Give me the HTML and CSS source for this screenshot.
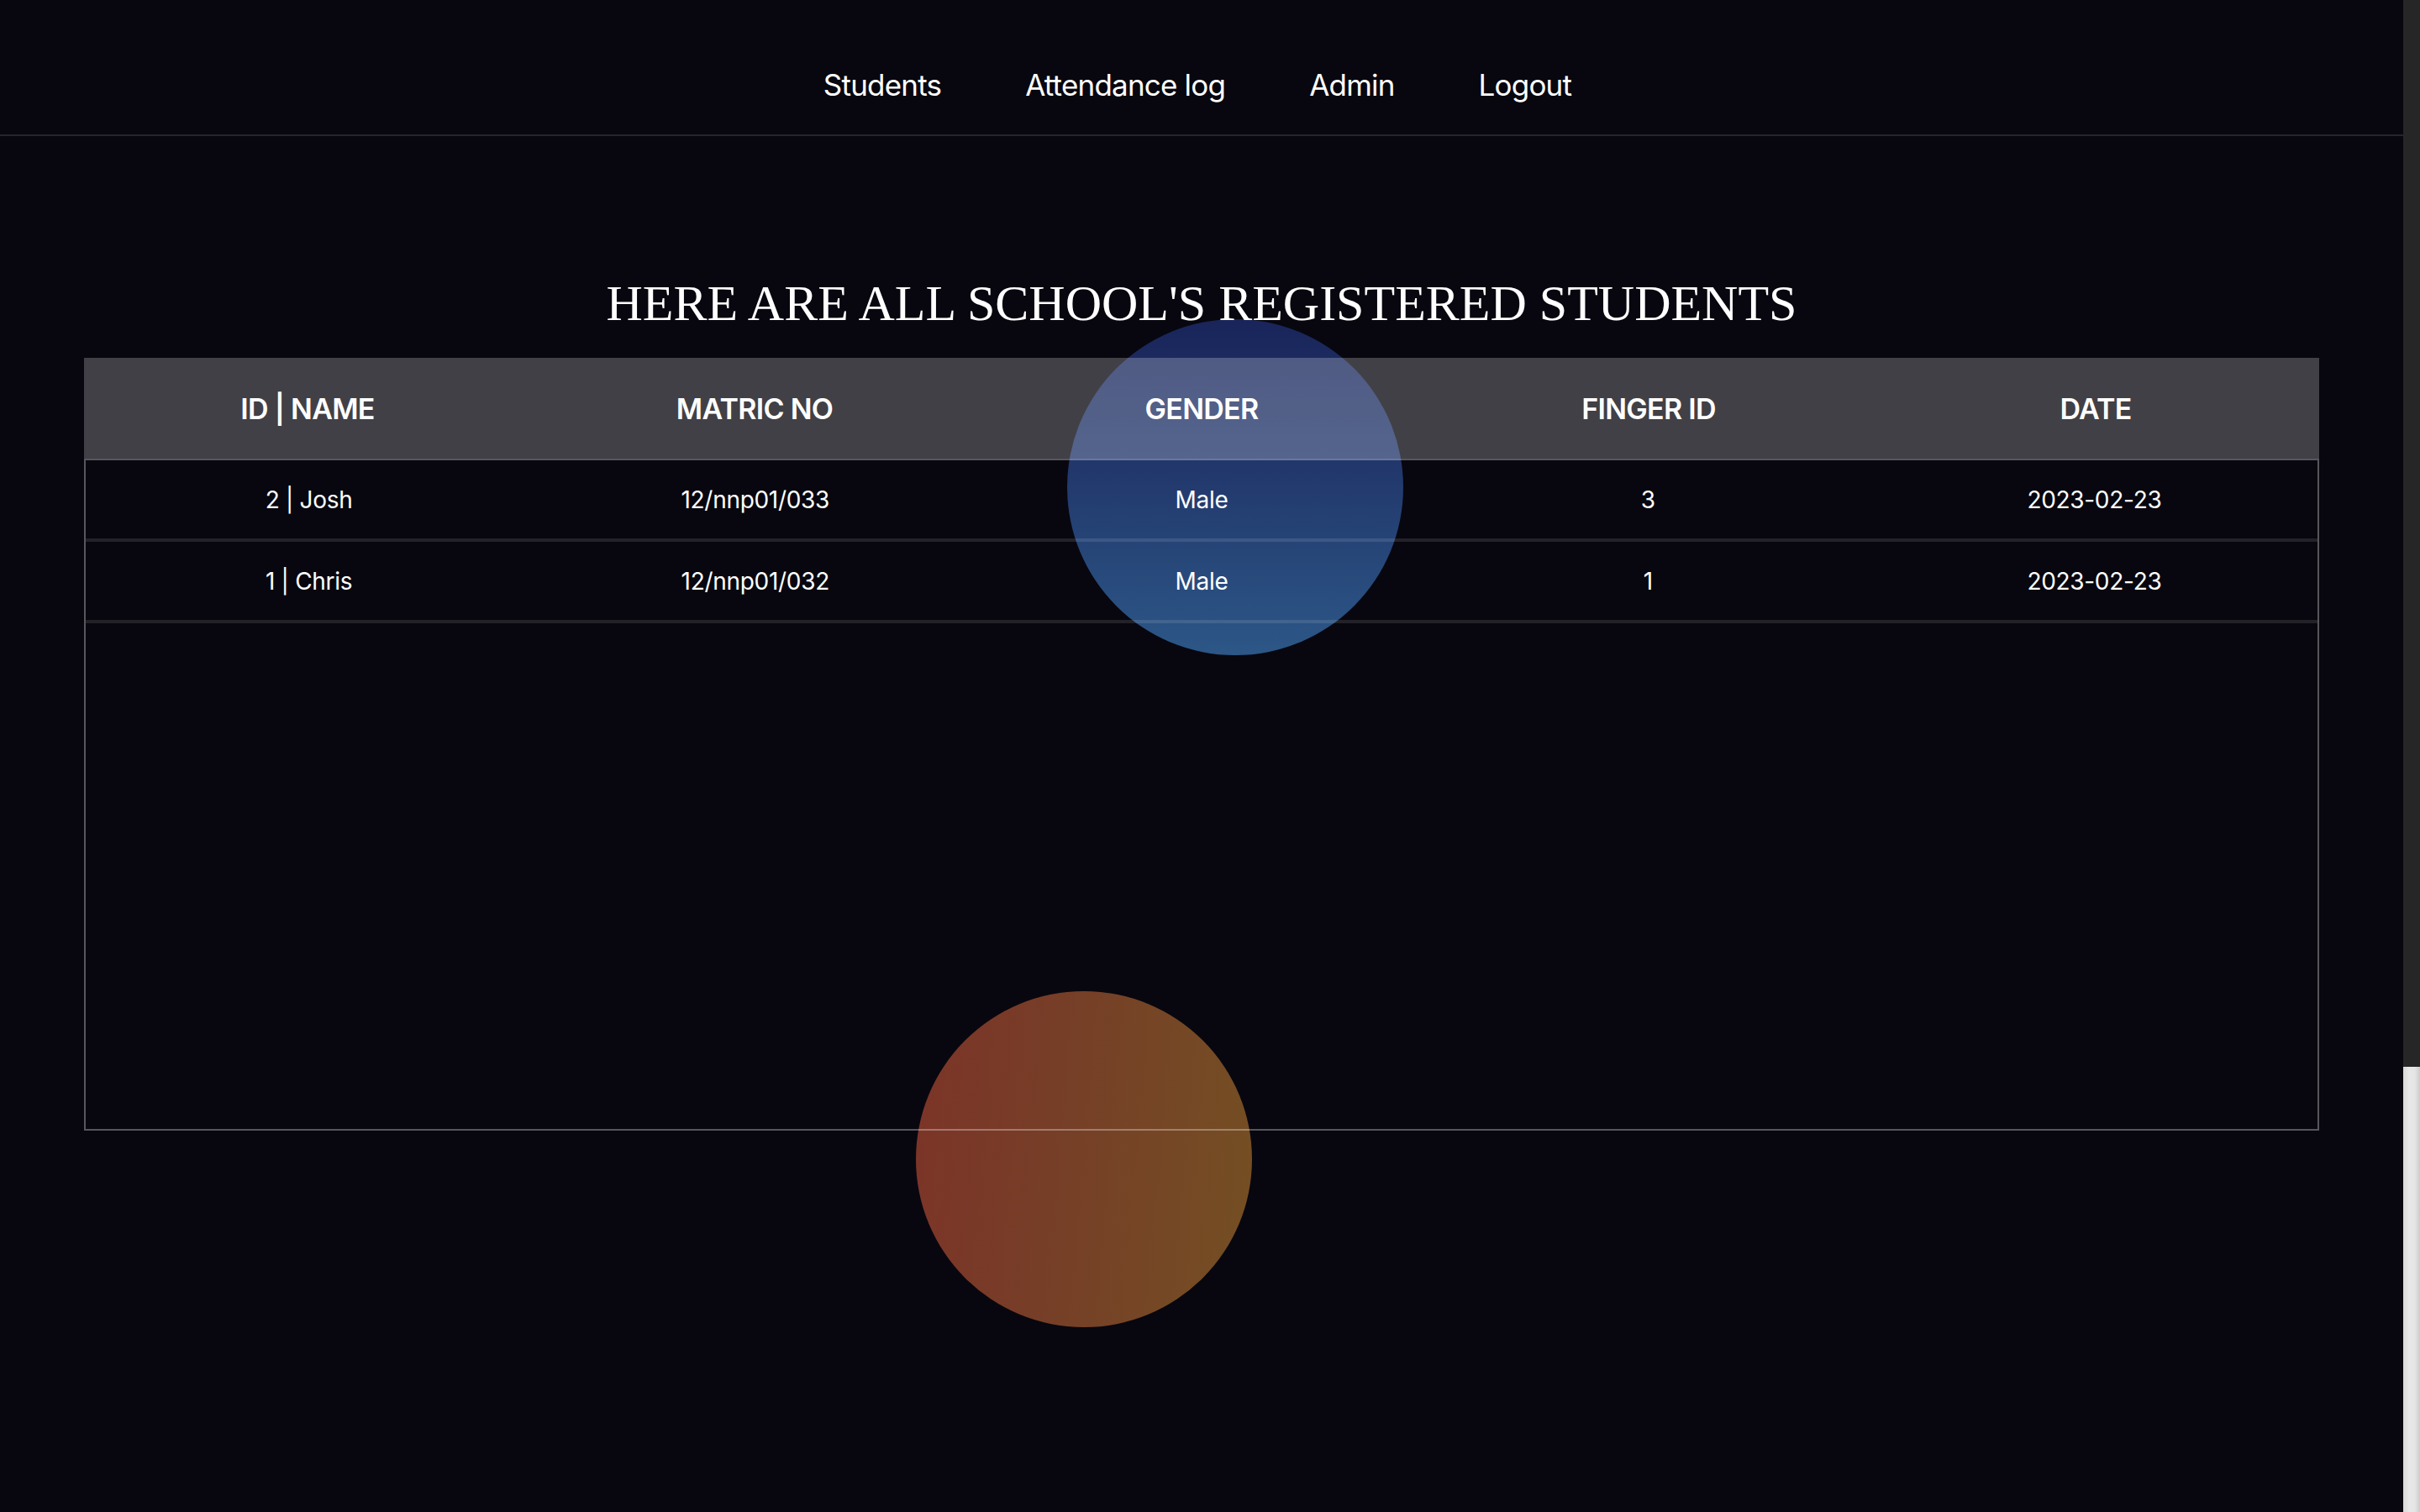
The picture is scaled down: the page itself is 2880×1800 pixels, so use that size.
FILE: index.html
```html
<!DOCTYPE html>
<html lang="en">
<head>
<meta charset="utf-8">
<title>Students</title>
<link rel="stylesheet" href="styles.css">
</head>
<body>
<div class="page">
  <main class="main">
    <div class="blob blob-blue"></div>
    <div class="blob blob-orange"></div>
    <nav class="nav">
      <a class="nav-link" href="#">Students</a>
      <a class="nav-link" href="#">Attendance log</a>
      <a class="nav-link" href="#">Admin</a>
      <a class="nav-link" href="#">Logout</a>
    </nav>
    <h1 class="title">HERE ARE ALL SCHOOL'S REGISTERED STUDENTS</h1>
    <section class="table-wrap">
      <div class="table">
        <div class="thead">
          <div class="th">ID | NAME</div>
          <div class="th">MATRIC NO</div>
          <div class="th">GENDER</div>
          <div class="th">FINGER ID</div>
          <div class="th">DATE</div>
        </div>
        <div class="tbody">
          <div class="tr">
            <div class="td">2 | Josh</div>
            <div class="td">12/nnp01/033</div>
            <div class="td">Male</div>
            <div class="td">3</div>
            <div class="td">2023-02-23</div>
          </div>
          <div class="tr">
            <div class="td">1 | Chris</div>
            <div class="td">12/nnp01/032</div>
            <div class="td">Male</div>
            <div class="td">1</div>
            <div class="td">2023-02-23</div>
          </div>
        </div>
      </div>
    </section>
  </main>
  <div class="scrollbar">
    <div class="scroll-space"></div>
    <div class="scroll-thumb"></div>
  </div>
</div>
</body>
</html>
```
FILE: styles.css
```css
html, body {
  margin: 0;
  padding: 0;
  height: 100%;
  overflow: hidden;
  background: #08070f;
}

.page {
  display: flex;
  width: 2880px;
  height: 1800px;
  font-family: Inter, "Noto Sans", "Liberation Sans", sans-serif;
  color: #ffffff;
}

.main {
  position: relative;
  flex: 1;
  display: flex;
  flex-direction: column;
  background: #08070f;
}

.blob {
  position: absolute;
  width: 400px;
  height: 400px;
  border-radius: 50%;
  z-index: 0;
}

.blob-blue {
  left: 1270px;
  top: 380px;
  background: linear-gradient(180deg, #19255a 0%, #22386c 45%, #2c5787 100%);
}

.blob-orange {
  left: 1090px;
  top: 1180px;
  background: linear-gradient(95deg, #7c3428 0%, #763f27 45%, #744f23 100%);
}

.nav {
  position: relative;
  z-index: 1;
  display: flex;
  justify-content: center;
  gap: 100px;
  padding: 79px 10px 37px 0;
  border-bottom: 2px solid #26252c;
}

.nav-link {
  font-size: 35px;
  line-height: 44px;
  letter-spacing: -0.8px;
  color: #ffffff;
  text-decoration: none;
  font-weight: 400;
}

.title {
  position: relative;
  z-index: 1;
  margin: 164px 0 0;
  font-family: "Liberation Serif", "Times New Roman", serif;
  font-weight: 400;
  font-size: 60px;
  line-height: 70px;
  text-align: center;
  color: #ffffff;
}

.table-wrap {
  position: relative;
  z-index: 1;
  padding: 30px 100px 0;
}

.thead {
  display: grid;
  grid-template-columns: repeat(5, 1fr);
  height: 120px;
  background: rgba(255, 255, 255, 0.232);
}

.th {
  display: flex;
  align-items: center;
  justify-content: center;
  font-size: 34px;
  font-weight: 600;
  letter-spacing: -0.7px;
}

.tbody {
  box-sizing: border-box;
  height: 800px;
  border: 2px solid rgba(255, 255, 255, 0.32);
}

.tr {
  display: grid;
  grid-template-columns: repeat(5, 1fr);
  height: 93px;
  border-bottom: 4px solid rgba(255, 255, 255, 0.11);
}

.td {
  display: flex;
  align-items: center;
  justify-content: center;
  font-size: 28px;
  font-weight: 400;
  letter-spacing: -0.3px;
}

.scrollbar {
  width: 20px;
  display: flex;
  flex-direction: column;
  background: #262626;
}

.scroll-space {
  height: 1270px;
}

.scroll-thumb {
  flex: 1;
  background: linear-gradient(90deg, #d9d9d9 0%, #e7e7e7 35%, #e5e5e5 70%, #cccccc 100%);
}
```
